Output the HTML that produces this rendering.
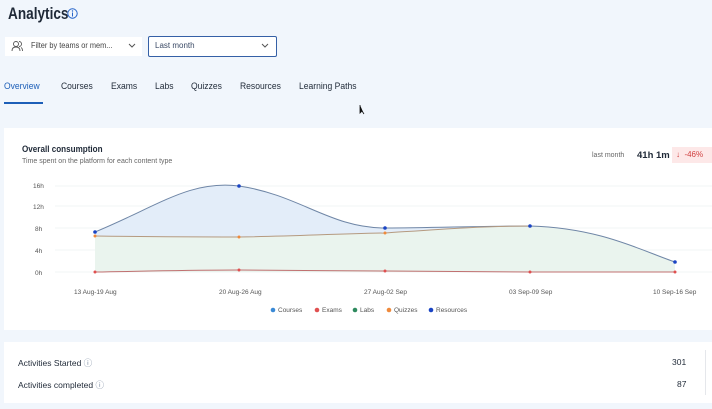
<!DOCTYPE html>
<html><head><style>
body{margin:0;width:712px;height:409px;overflow:hidden;background:#f1f6fc;font-family:"Liberation Sans",sans-serif;position:relative;color:#1f2937}
.a{position:absolute;white-space:nowrap}
.card{position:absolute;background:#fff}
</style></head><body>
<div class="a" style="left:8px;top:4px;font-size:17px;font-weight:bold;color:#1f2937;transform:scaleX(0.8);transform-origin:left">Analytics</div>
<svg class="a" style="left:67px;top:8px" width="11" height="11"><circle cx="5.5" cy="5.5" r="4.7" fill="none" stroke="#2563c9" stroke-width="1"/><line x1="5.5" y1="4.5" x2="5.5" y2="8.5" stroke="#2563c9"/><circle cx="5.5" cy="3" r=".7" fill="#2563c9"/></svg>
<div class="a" style="left:5px;top:37px;width:137px;height:19px;background:#fff"></div>
<svg class="a" style="left:11px;top:40px" width="12" height="12"><circle cx="5" cy="4" r="2.5" fill="none" stroke="#555" stroke-width=".9"/><path d="M1 11c0-3 2-4 4-4s4 1 4 4M8 1.5a2.5 2.5 0 010 5M10 7.5c1 .5 1.5 2 1.5 3.5" fill="none" stroke="#555" stroke-width=".9"/></svg>
<div class="a" style="left:31px;top:41px;font-size:8px;color:#444;transform:scaleX(0.92);transform-origin:left">Filter by teams or mem...</div>
<svg class="a" style="left:128px;top:43px" width="8" height="6"><path d="M1 1l3 3 3-3" fill="none" stroke="#555"/></svg>
<div class="a" style="left:148px;top:36px;width:127px;height:19px;border:1.2px solid #3560a6;border-radius:2px;background:#fff"></div>
<div class="a" style="left:155px;top:41px;font-size:8px;color:#3b4a66">Last month</div>
<svg class="a" style="left:261px;top:43px" width="8" height="6"><path d="M1 1l3 3 3-3" fill="none" stroke="#555"/></svg>
<div class="a" style="top:81px;font-size:9.5px;left:4px;color:#1d5fb8;transform:scaleX(0.9);transform-origin:left">Overview</div>
<div class="a" style="left:61px;top:81px;font-size:9.5px;transform:scaleX(0.9);transform-origin:left">Courses</div>
<div class="a" style="left:111px;top:81px;font-size:9.5px;transform:scaleX(0.9);transform-origin:left">Exams</div>
<div class="a" style="left:155px;top:81px;font-size:9.5px;transform:scaleX(0.9);transform-origin:left">Labs</div>
<div class="a" style="left:191px;top:81px;font-size:9.5px;transform:scaleX(0.9);transform-origin:left">Quizzes</div>
<div class="a" style="left:240px;top:81px;font-size:9.5px;transform:scaleX(0.9);transform-origin:left">Resources</div>
<div class="a" style="left:299px;top:81px;font-size:9.5px;transform:scaleX(0.9);transform-origin:left">Learning Paths</div>
<div class="a" style="left:4px;top:102px;width:39px;height:2px;background:#1d5fb8"></div>
<div class="card" style="left:4px;top:128px;width:708px;height:202px"></div>
<div class="a" style="left:22px;top:144px;font-size:9px;font-weight:bold;transform:scaleX(0.9);transform-origin:left">Overall consumption</div>
<div class="a" style="left:22px;top:158px;font-size:7px;color:#666">Time spent on the platform for each content type</div>
<div class="a" style="left:592px;top:152px;font-size:7px;color:#666">last month</div>
<div class="a" style="left:637px;top:150px;font-size:9.5px;font-weight:bold">41h 1m</div>
<div class="a" style="left:672px;top:147px;width:40px;height:16px;background:#fde8e8"></div>
<div class="a" style="left:676px;top:150px;font-size:8px;color:#d04040">↓ &nbsp;-46%</div>
<svg class="a" style="left:0;top:0" width="712" height="409">
<g stroke="#eef0f3" stroke-width=".7"><line x1="55" y1="186" x2="712" y2="186"/><line x1="55" y1="206" x2="712" y2="206"/><line x1="55" y1="228" x2="712" y2="228"/><line x1="55" y1="250" x2="712" y2="250"/><line x1="55" y1="272" x2="712" y2="272"/></g>
<g font-family="Liberation Sans" font-size="6.5" fill="#555"><text x="33" y="188">16h</text><text x="33" y="209">12h</text><text x="35" y="231">8h</text><text x="35" y="253">4h</text><text x="35" y="275">0h</text>
<text x="74" y="294">13 Aug-19 Aug</text><text x="219" y="294">20 Aug-26 Aug</text><text x="364" y="294">27 Aug-02 Sep</text><text x="509" y="294">03 Sep-09 Sep</text><text x="653" y="294">10 Sep-16 Sep</text>
<text x="278" y="312">Courses</text><text x="322" y="312">Exams</text><text x="360" y="312">Labs</text><text x="394" y="312">Quizzes</text><text x="436" y="312">Resources</text></g>
<circle cx="273" cy="310" r="2.3" fill="#3a8ad6"/><circle cx="317" cy="310" r="2.3" fill="#e05050"/><circle cx="355" cy="310" r="2.3" fill="#2e8a5e"/><circle cx="389" cy="310" r="2.3" fill="#ef8a3c"/><circle cx="431" cy="310" r="2.3" fill="#1a44c4"/>
<path d="M95 232C160 205 190 180 239 186C300 195 330 228 385 228C430 228 480 226 530 226C600 228 640 250 675 262L675 272L95 272Z" fill="#e3edf9"/>
<path d="M95 236C160 237 190 237 239 237C300 236 330 234 385 233C430 230 480 226 530 226C600 228 640 250 675 262L675 272L95 272Z" fill="#eaf4ee"/>
<path d="M95 232C160 205 190 180 239 186C300 195 330 228 385 228C430 228 480 226 530 226C600 228 640 250 675 262" fill="none" stroke="#6f86a6" stroke-width="1"/>
<path d="M95 236C160 237 190 237 239 237C300 236 330 234 385 233C430 230 480 226 530 226" fill="none" stroke="#b59a80" stroke-width="1"/>
<path d="M95 272C160 271 190 270 239 270C300 270 330 271 385 271C430 271 480 272 530 272L675 272" fill="none" stroke="#c07070" stroke-width="1"/>
<g fill="#1a44c4"><circle cx="95" cy="232" r="1.8"/><circle cx="239" cy="186" r="1.8"/><circle cx="385" cy="228" r="1.8"/><circle cx="530" cy="226" r="1.8"/><circle cx="675" cy="262" r="1.8"/></g>
<g fill="#ef8a3c"><circle cx="95" cy="236" r="1.5"/><circle cx="239" cy="237" r="1.5"/><circle cx="385" cy="233" r="1.5"/></g>
<g fill="#e05050"><circle cx="95" cy="272" r="1.5"/><circle cx="239" cy="270" r="1.5"/><circle cx="385" cy="271" r="1.5"/><circle cx="530" cy="272" r="1.5"/><circle cx="675" cy="272" r="1.5"/></g>
<path d="M360 105l0 8 2-2 2 3" fill="#111" stroke="#111" stroke-width=".8"/>
</svg>
<div class="card" style="left:4px;top:342px;width:708px;height:61px"></div>
<div class="a" style="left:18px;top:357px;font-size:8.5px">Activities Started <span style="color:#7a8aa0">ⓘ</span></div>
<div class="a" style="left:18px;top:379px;font-size:8.5px">Activities completed <span style="color:#7a8aa0">ⓘ</span></div>
<div class="a" style="left:672px;top:357px;font-size:8.5px">301</div>
<div class="a" style="left:677px;top:379px;font-size:8.5px">87</div>
<div class="a" style="left:705px;top:350px;width:1px;height:45px;background:#e5e7eb"></div>
</body></html>
